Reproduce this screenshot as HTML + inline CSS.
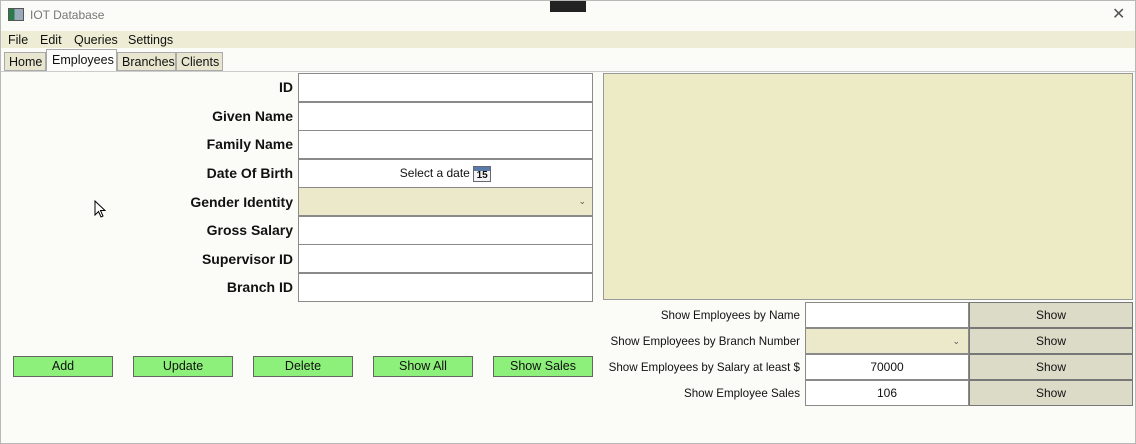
<!DOCTYPE html>
<html><head><meta charset="utf-8"><style>
*{box-sizing:border-box;margin:0;padding:0}
body{width:1136px;height:444px;background:#fbfbf7;font-family:"Liberation Sans",sans-serif;font-size:12px;color:#111;position:relative;overflow:hidden}
.a{position:absolute}
.lbl{position:absolute;right:843px;font-weight:bold;font-size:14px;text-align:right;white-space:nowrap}
.in{position:absolute;left:298px;width:295px;height:29px;background:#fff;border:1px solid #8a8a8a}
.btn{position:absolute;top:356px;width:100px;height:21px;background:#8cf07a;border:1px solid #666;text-align:center;line-height:19px;font-size:12.5px}
.ql{position:absolute;right:336px;font-size:11.6px;white-space:nowrap}
.qi{position:absolute;left:805px;width:164px;height:26px;background:#fff;border:1px solid #8a8a8a;text-align:center;line-height:24px}
.qb{position:absolute;left:969px;width:164px;height:26px;background:#dcdbc8;border:1px solid #777;text-align:center;line-height:24px}
</style></head><body>
<div class="a" style="left:8px;top:8px;width:16px;height:13px;border:1px solid #555;background:linear-gradient(90deg,#2a7a4a 40%,#9ab 40%)"></div>
<div class="a" style="left:30px;top:8px;color:#777;font-size:12px">IOT Database</div>
<div class="a" style="left:550px;top:0;width:36px;height:12px;background:#222"></div>
<div class="a" style="left:1112px;top:4px;color:#555;font-size:16px">✕</div>
<div class="a" style="left:0;top:31px;width:1136px;height:17px;background:#eeecd4"></div>
<div class="a" style="left:8px;top:33px;font-size:12.5px">File</div>
<div class="a" style="left:40px;top:33px;font-size:12.5px">Edit</div>
<div class="a" style="left:74px;top:33px;font-size:12.5px">Queries</div>
<div class="a" style="left:128px;top:33px;font-size:12.5px">Settings</div>
<div class="a" style="left:4px;top:52px;width:42px;height:19px;background:#e8e6cf;border:1px solid #aaa;padding:2px 4px;font-size:12.5px">Home</div>
<div class="a" style="left:46px;top:49px;width:71px;height:22px;background:#fcfcf8;border:1px solid #aaa;border-bottom:none;padding:3px 5px;font-size:12.5px">Employees</div>
<div class="a" style="left:117px;top:52px;width:59px;height:19px;background:#e8e6cf;border:1px solid #aaa;padding:2px 4px;font-size:12.5px">Branches</div>
<div class="a" style="left:176px;top:52px;width:47px;height:19px;background:#e8e6cf;border:1px solid #aaa;padding:2px 4px;font-size:12.5px">Clients</div>
<div class="a" style="left:0;top:71px;width:1136px;height:1px;background:#ccc"></div>

<div class="lbl" style="top:79px">ID</div>
<div class="lbl" style="top:108px">Given Name</div>
<div class="lbl" style="top:136px">Family Name</div>
<div class="lbl" style="top:165px">Date Of Birth</div>
<div class="lbl" style="top:194px">Gender Identity</div>
<div class="lbl" style="top:222px">Gross Salary</div>
<div class="lbl" style="top:251px">Supervisor ID</div>
<div class="lbl" style="top:279px">Branch ID</div>
<div class="in" style="top:73px"></div>
<div class="in" style="top:102px"></div>
<div class="in" style="top:130px"></div>
<div class="in" style="top:159px;text-align:center;line-height:27px">Select a date <span style="display:inline-block;width:18px;height:16px;border:1px solid #667;vertical-align:middle;background:linear-gradient(#5a7aa8 4px,#f4f4f4 4px);font-size:10px;line-height:13px;font-weight:bold;padding-top:2px">15</span></div>
<div class="in" style="top:187px;background:#ebe9c9;text-align:right;padding-right:6px;line-height:26px;color:#555;font-size:9px">⌄</div>
<div class="in" style="top:216px"></div>
<div class="in" style="top:244px"></div>
<div class="in" style="top:273px"></div>

<div class="a" style="left:603px;top:73px;width:530px;height:227px;background:#ecebc6;border:1px solid #999"></div>

<div class="btn" style="left:13px">Add</div>
<div class="btn" style="left:133px">Update</div>
<div class="btn" style="left:253px">Delete</div>
<div class="btn" style="left:373px">Show All</div>
<div class="btn" style="left:493px">Show Sales</div>

<div class="ql" style="top:309px">Show Employees by Name</div>
<div class="ql" style="top:335px">Show Employees by Branch Number</div>
<div class="ql" style="top:361px">Show Employees by Salary at least $</div>
<div class="ql" style="top:387px">Show Employee Sales</div>
<div class="qi" style="top:302px"></div>
<div class="qi" style="top:328px;background:#ebe9c9;text-align:right;padding-right:8px;color:#555;font-size:9px">⌄</div>
<div class="qi" style="top:354px">70000</div>
<div class="qi" style="top:380px">106</div>
<div class="qb" style="top:302px">Show</div>
<div class="qb" style="top:328px">Show</div>
<div class="qb" style="top:354px">Show</div>
<div class="qb" style="top:380px">Show</div>
<svg class="a" style="left:94px;top:200px" width="12" height="18"><path d="M1 1 L1 15 L4.5 11.5 L7 17 L9 16 L6.5 10.5 L11 10.5 Z" fill="#fff" stroke="#000"/></svg>
<div class="a" style="left:0;top:0;width:1136px;height:444px;border:1px solid #b8b8b8;pointer-events:none"></div>
</body></html>
